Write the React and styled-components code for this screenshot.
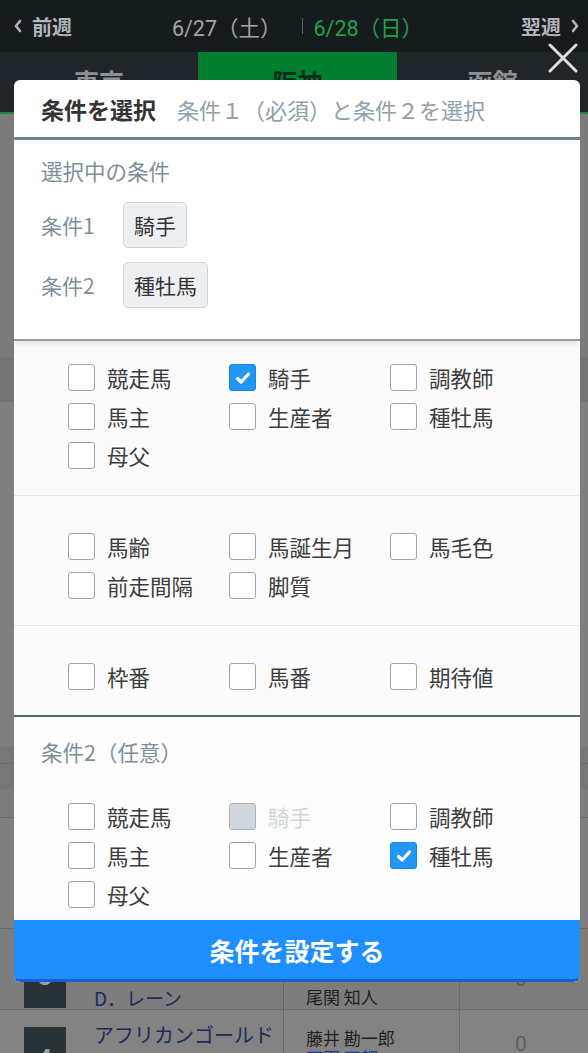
import React from "react";
import styled, { createGlobalStyle } from "styled-components";

const GlobalStyle = createGlobalStyle`
  html, body {
    margin: 0;
    padding: 0;
  }
  body {
    font-family: "Noto Sans CJK JP", "Noto Sans", sans-serif;
  }
`;

const GROUP_A = [
  [
    { label: "競走馬" },
    { label: "騎手", checked: true },
    { label: "調教師" },
    { label: "馬主" },
    { label: "生産者" },
    { label: "種牡馬" },
    { label: "母父" },
  ],
  [
    { label: "馬齢" },
    { label: "馬誕生月" },
    { label: "馬毛色" },
    { label: "前走間隔" },
    { label: "脚質" },
  ],
  [{ label: "枠番" }, { label: "馬番" }, { label: "期待値" }],
];

const GROUP_B = [
  { label: "競走馬" },
  { label: "騎手", disabled: true },
  { label: "調教師" },
  { label: "馬主" },
  { label: "生産者" },
  { label: "種牡馬", checked: true },
  { label: "母父" },
];

const App = () => {
  return (
    <>
      <GlobalStyle />
      <Page>
        <TopBar>
          <NavLink>
            <Chevron dir="left" />
            前週
          </NavLink>
          <Dates>
            <DateText>6/27（土）</DateText>
            <DateSep />
            <DateText $active>6/28（日）</DateText>
          </Dates>
          <NavLink>
            翌週
            <Chevron dir="right" />
          </NavLink>
        </TopBar>
        <TabBar>
          <Tab>東京</Tab>
          <Tab $active>阪神</Tab>
          <Tab>函館</Tab>
        </TabBar>

        <Backdrop>
          <Band $h={244} $bg="#7b7b7b" />
          <Band $h={44} $bg="#747474" />
          <Band $h={345} $bg="#7f7f7f" />
          <Band $h={16} $bg="#777777" $line />
          <Band $h={25} $bg="#777777" />
          <Band $h={28} $bg="#7d7d7d" $line />
          <Band $h={110} $bg="#7f7f7f" $line />
          <RaceRow
            no="3"
            horse="ワンダーウマ"
            jockey="D．レーン"
            people={["", "", "尾関 知人"]}
            countTop={38}
          />
          <RaceRow
            no="4"
            horse="アフリカンゴールド"
            jockey="国分 恭介"
            people={["藤井 勘一郎", "西園 正都"]}
            countTop={22}
            light
          />
        </Backdrop>

        <CloseButton aria-label="閉じる">
          <svg width="30" height="30" viewBox="0 0 30 30">
            <path
              d="M2 2 L28 28 M28 2 L2 28"
              stroke="#dedede"
              strokeWidth="3"
              strokeLinecap="round"
            />
          </svg>
        </CloseButton>

        <Modal>
          <ModalHeader>
            <ModalTitle>条件を選択</ModalTitle>
            <ModalSub>条件１（必須）と条件２を選択</ModalSub>
          </ModalHeader>

          <Selected>
            <Heading>選択中の条件</Heading>
            <SelRow>
              <SelLabel>条件1</SelLabel>
              <Chip>騎手</Chip>
            </SelRow>
            <SelRow>
              <SelLabel>条件2</SelLabel>
              <Chip>種牡馬</Chip>
            </SelRow>
          </Selected>

          <Options>
            {GROUP_A.map((group, i) => (
              <OptSection
                key={i}
                $top={i === 0 ? 23 : 37}
                $bottom={i === 2 ? 25 : 26}
                $last={i === 2}
              >
                <Grid>
                  {group.map((item) => (
                    <Check key={item.label} {...item} />
                  ))}
                </Grid>
              </OptSection>
            ))}
          </Options>

          <Cond2>
            <Heading>条件2（任意）</Heading>
            <Grid>
              {GROUP_B.map((item) => (
                <Check key={item.label} {...item} />
              ))}
            </Grid>
          </Cond2>

          <SubmitButton>条件を設定する</SubmitButton>
        </Modal>
      </Page>
    </>
  );
};

const Chevron = ({ dir }) => (
  <svg width="10" height="14" viewBox="0 0 10 14">
    <path
      d={dir === "left" ? "M7 2 L3 7 L7 12" : "M3 2 L7 7 L3 12"}
      stroke="#b3b6b8"
      strokeWidth="2.6"
      fill="none"
      strokeLinecap="round"
      strokeLinejoin="round"
    />
  </svg>
);

const Check = ({ label, checked, disabled }) => (
  <Item>
    <Box $checked={checked} $disabled={disabled}>
      {checked && (
        <svg width="18" height="18" viewBox="0 0 18 18">
          <path
            d="M3.5 9.5 L7.2 13 L14.5 5"
            stroke="#fff"
            strokeWidth="3.2"
            fill="none"
            strokeLinecap="round"
            strokeLinejoin="round"
          />
        </svg>
      )}
    </Box>
    <ItemLabel $disabled={disabled}>{label}</ItemLabel>
  </Item>
);

const RaceRow = ({ no, horse, jockey, people, light, countTop }) => (
  <Row $light={light}>
    <RowMain>
      <Badge>{no}</Badge>
      <Names>
        <HorseName>{horse}</HorseName>
        <Jockey>{jockey}</Jockey>
      </Names>
    </RowMain>
    <RowPeople>
      {people.map((p, i) => (
        <Person key={i} $blue={i === 1 && people.length === 2}>
          {p || "\u00a0"}
        </Person>
      ))}
    </RowPeople>
    <RowCount $top={countTop}>0</RowCount>
  </Row>
);

const Page = styled.div`
  position: relative;
  width: 588px;
  height: 1053px;
  overflow: hidden;
  background: #7f7f7f;
`;

const TopBar = styled.header`
  height: 52px;
  display: flex;
  align-items: center;
  justify-content: space-between;
  padding: 0 8px 0 13px;
  background: #161b1e;
`;

const NavLink = styled.span`
  display: flex;
  align-items: center;
  gap: 9px;
  font-size: 20px;
  font-weight: 700;
  color: #b3b6b8;
`;

const Dates = styled.div`
  display: flex;
  align-items: center;
  margin-left: 2px;
`;

const DateText = styled.span`
  font-family: Roboto, "Noto Sans CJK JP", sans-serif;
  font-size: 21.5px;
  color: ${(p) => (p.$active ? "#23a043" : "#a2a6a8")};
`;

const DateSep = styled.span`
  width: 1px;
  height: 16px;
  margin: 0 11px 0 20px;
  background: #5c6366;
`;

const TabBar = styled.nav`
  display: grid;
  grid-template-columns: 198px 199px 1fr;
  height: 60px;
  background: #1f2529;
  border-bottom: 2px solid #1a8a3a;
`;

const Tab = styled.div`
  display: flex;
  justify-content: center;
  padding-top: 12px;
  font-size: 25px;
  line-height: 34px;
  font-weight: 700;
  color: ${(p) => (p.$active ? "#0c2d16" : "#8d9193")};
  background: ${(p) => (p.$active ? "#007f31" : "transparent")};
`;

const Backdrop = styled.div`
  display: flex;
  flex-direction: column;
`;

const Band = styled.div`
  height: ${(p) => p.$h}px;
  flex-shrink: 0;
  background: ${(p) => p.$bg};
  border-bottom: ${(p) => (p.$line ? "1px solid #6c6c6c" : "none")};
`;

const Row = styled.div`
  height: 80px;
  flex-shrink: 0;
  display: grid;
  grid-template-columns: 284px 176px 1fr;
  background: ${(p) => (p.$light ? "#838383" : "#7d7d7d")};
  border-bottom: 1px solid #6e6e6e;
`;

const RowMain = styled.div`
  display: flex;
  padding: 17px 0 0 24px;
  gap: 28px;
  border-right: 1px solid #686868;
`;

const Badge = styled.div`
  width: 42px;
  height: 62px;
  flex-shrink: 0;
  display: flex;
  align-items: center;
  justify-content: center;
  background: #283237;
  color: #9ea3a6;
  font-family: Roboto, sans-serif;
  font-weight: 700;
  font-size: 24px;
`;

const Names = styled.div`
  display: flex;
  flex-direction: column;
  gap: 16px;
  margin-top: -6px;
`;

const HorseName = styled.div`
  font-size: 20px;
  line-height: 28px;
  color: #1c2a5c;
  white-space: nowrap;
`;

const Jockey = styled.div`
  font-size: 19px;
  line-height: 28px;
  color: #1c2a5c;
  white-space: nowrap;
`;

const RowPeople = styled.div`
  display: flex;
  flex-direction: column;
  padding: 18px 0 0 22px;
  border-right: 1px solid #6c6c6c;
`;

const Person = styled.div`
  font-size: 17px;
  line-height: 20px;
  color: ${(p) => (p.$blue ? "#1c3a8c" : "#1e1e1e")};
  white-space: nowrap;
`;

const RowCount = styled.div`
  display: flex;
  justify-content: center;
  padding-top: ${(p) => p.$top}px;
  padding-right: 6px;
  font-family: Roboto, sans-serif;
  font-size: 21px;
  color: #5e5e5e;
`;

const CloseButton = styled.button`
  position: absolute;
  top: 43px;
  left: 548px;
  width: 30px;
  height: 30px;
  padding: 0;
  border: none;
  background: none;
  display: flex;
`;

const Modal = styled.div`
  position: absolute;
  top: 80px;
  left: 14px;
  width: 566px;
  border-radius: 6px;
  overflow: hidden;
  background: #fff;
  display: flex;
  flex-direction: column;
`;

const ModalHeader = styled.div`
  height: 57px;
  display: flex;
  align-items: center;
  gap: 21px;
  padding: 0 27px;
  border-bottom: 3px solid #6e8593;
`;

const ModalTitle = styled.span`
  font-size: 23px;
  font-weight: 700;
  color: #333;
`;

const ModalSub = styled.span`
  font-size: 22px;
  color: #8ea0ab;
`;

const Selected = styled.section`
  position: relative;
  z-index: 1;
  display: flex;
  flex-direction: column;
  padding: 16px 27px 31px;
  background: #fff;
  border-bottom: 2px solid #8d9ca6;
  box-shadow: 0 3px 5px rgba(60, 80, 90, 0.12);
`;

const Heading = styled.div`
  font-size: 21.5px;
  line-height: 30px;
  color: #7c8f9b;
  margin-bottom: 16px;
`;

const SelRow = styled.div`
  display: flex;
  align-items: center;
  & + & {
    margin-top: 14px;
  }
`;

const SelLabel = styled.span`
  width: 82px;
  font-size: 21px;
  color: #7c8f9b;
`;

const Chip = styled.span`
  height: 46px;
  box-sizing: border-box;
  display: flex;
  align-items: center;
  padding: 0 10px;
  border: 1px solid #cdd5db;
  border-radius: 5px;
  background: #edf0f3;
  font-size: 21px;
  color: #333;
`;

const Options = styled.div`
  background: #fbfbfb;
  border-bottom: 2px solid #4e6876;
`;

const OptSection = styled.section`
  padding: ${(p) => p.$top}px 0 ${(p) => p.$bottom}px 54px;
  border-bottom: ${(p) => (p.$last ? "none" : "1px solid #e2e4e6")};
`;

const Grid = styled.div`
  display: grid;
  grid-template-columns: repeat(3, 161px);
  row-gap: 12px;
`;

const Item = styled.label`
  display: flex;
  align-items: center;
  height: 27px;
`;

const Box = styled.span`
  width: 27px;
  height: 27px;
  box-sizing: border-box;
  flex-shrink: 0;
  border-radius: 3px;
  display: flex;
  align-items: center;
  justify-content: center;
  border: 1.5px solid
    ${(p) => (p.$checked ? "#1b86e6" : p.$disabled ? "#a7b1b8" : "#a3a3a3")};
  background: ${(p) =>
    p.$checked ? "#2196f3" : p.$disabled ? "#d0d8dd" : "#fff"};
`;

const ItemLabel = styled.span`
  margin-left: 12px;
  font-size: 21.5px;
  line-height: 27px;
  color: ${(p) => (p.$disabled ? "#cfd7dc" : "#3d3d3d")};
`;

const Cond2 = styled.section`
  display: flex;
  flex-direction: column;
  padding: 20px 0 12px 27px;
  background: #fdfdfd;

  ${Grid} {
    margin-top: 20px;
    margin-left: 27px;
  }
`;

const SubmitButton = styled.button`
  height: 62px;
  border: none;
  border-bottom: 3px solid #1a5fd2;
  border-radius: 0 0 6px 6px;
  background: #1f8fff;
  color: #fff;
  font-family: "Noto Sans CJK JP", sans-serif;
  font-size: 25px;
  font-weight: 700;
`;

export default App;
